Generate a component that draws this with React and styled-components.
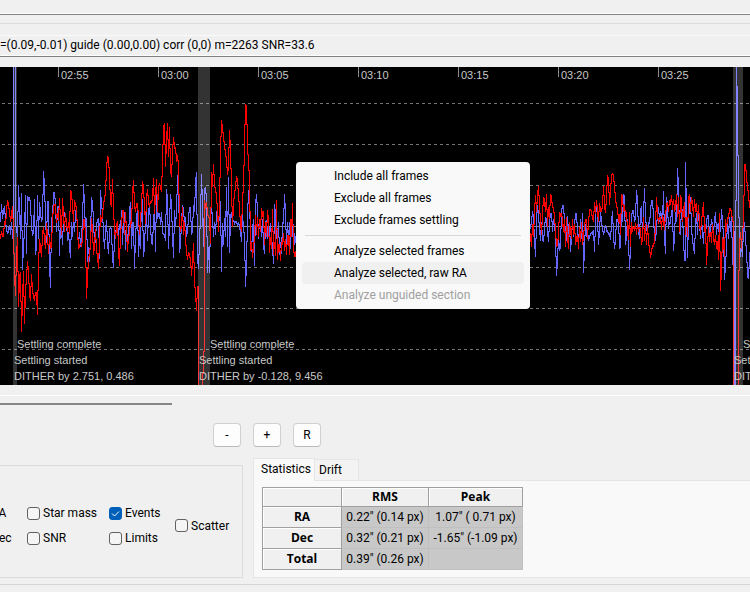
import styled, { createGlobalStyle } from 'styled-components';

// pixels above the zero line, one sample per pixel column
const raTrace = [
    {
        start: 0,
        values: [
            -12, -4, -10, -10, 6, 2, 14, 27, 20, 15, 5, 10, 21, -5, -50, -69, -30, -10, -80, -52,
            -45, -105, -73, -44, -97, -65, -52, -34, -46, -69, -74, -47, -65, -70, -74, -65, -68, -88, -40, -12,
            -22, -30, -8, 0, -15, -22, 4, -10, -27, -10, -22, -20, 8, 18, 23, 20, 4, 14, 6, 29,
            5, -8, 29, 10, -5, 14, 2, -5, 5, -7, 37, 33, 20, 5, 27, 21, 18, -5, -22, -20,
            -17, -20, -12, 5, 8, -10, -72, -50, -34, -26, -20, 9, -5, -28, -20, -2, -24, -30, -42, -12,
            12, 5, 10, 23, 27, 35, 57, 71, 67, 50, 24, 20, 48, 18, -5, -12, 0, 6, -25, -39,
            -5, 0, 17, 15, -8, 15, -5, -25, -10, -8, 6, 3, 33, 47, 20, 15, 23, 22, 10, -8,
            7, 20, 46, 38, 20, 3, 27, 38, 24, 20, 26, 24, 27, 49, 13, 30, 48, 15, 38, 44,
            38, 35, 65, 98, 104, 60, 85, 104, 70, 100, 55, 50, 73, 90, 78, 80, 65, 72, 60, 4,
            -5, 0, 20, -8, 5, -14, -25, -33, -25, -30, -32, -49, -35, -16, -57, -66, -84, -60, -170, -170,
            -170, -170, -170, -125, 27, 18, 25, 12, 10, 8, -17, 55, 40, 63, 40, 38, 30, 15, -5, 24,
            73, 107, 97, 90, 80, 74, 65, 52, 60, 97, 75, 40, 0, 22, 33, 38, 51, 45, 30, 20,
            0, -5, 28, 40, 81, 123, 119, 85, 58, 53, -24, -15, -31, -22, -10, 12, -8, 10, -10, 8,
            -5, 19, 10, 16, -18, 5, -10, 17, 5, -26, -10, -22, 18, -28, -15, -29, 27, -33, -20, -17,
            -34, -15, -18, -6, -24, -12, -28, -8, -10, -28, 8, -10, 24, -22, -30, -30, -20,
        ],
    },
    {
        start: 529,
        values: [
            -5, -10, -20, 3, -10, 14, 32, 15, 30, 41, 20, 5, -8, 12, 30, 25, 15, 33, 0, 20,
            8, 33, 28, 20, 18, 10, -5, -20, -18, -8, 15, 10, 14, 5, -5, 8, -20, 10, -10, -22,
            5, -5, -12, 8, -8, 3, -18, -12, -8, -22, 0, -15, 5, -18, -10, 2, 5, 8, -12, 5,
            15, 18, 13, 8, 5, 25, 13, 27, 15, 5, 24, 15, 15, 20, 41, 20, 14, 30, 52, 45,
            22, 35, 50, 54, 50, 40, 28, 20, 18, 5, 13, -8, 33, 28, 15, 22, 10, 15, -5, -13,
            15, -20, 5, -5, 0, -4, 4, -8, 3, -5, 0, -4, -18, -12, 10, -14, 3, -18, 2, -16,
            -22, -31, -26, -18, -20, -14, 0, 30, 12, 3, 10, 8, -3, 12, 5, -3, 12, 20, 25, 15,
            27, 22, 32, 17, 28, 15, 18, 33, 10, 30, -5, 32, 25, 5, 15, 25, -8, 10, -10, 27,
            33, 15, 30, 22, 10, 28, 15, 24, 5, 22, 3, -8, 8, 12, 25, -5, 3, -38, -20, 0,
            -15, -5, -16, 3, -12, -18, -8, -22, -14, -33, 14, -64, -42, -10, -16, -30, 8, -5, 10, 8,
            18, 17, 14, 5, -170, -170, -170, -170, -170, -68, -20, -5, -22, -5, 2, 60, 63, 48, 40, 32,
            20, 18,
        ],
    },
];

const decTrace = [
    {
        start: 0,
        values: [
            5, 23, 8, 15, 21, 5, -4, -7, -5, 2, -8, 5, -12, 170, 170, 0, 0, -12, 42, 15,
            -12, 34, -43, -20, -5, 32, -27, 31, 26, 30, 22, 0, -9, -6, 28, -28, -20, 32, -12, 25,
            13, 5, 8, 56, 39, 10, -16, 26, 24, -40, -61, 8, 10, 32, 35, 20, -5, 18, 21, -29,
            5, -5, -18, 8, 15, 5, 6, -14, -5, -22, -31, 5, -10, 8, -5, 12, 19, -8, -17, -5,
            -20, -10, 5, 43, 20, -3, 9, -35, -20, -35, -10, 30, 22, 8, -20, -12, 3, 5, 9, -32,
            37, 20, 15, -8, -22, -5, 7, -18, -27, -5, 0, -5, -31, -41, -10, -5, -4, 5, -10, 3,
            -5, 17, -18, 5, 15, -23, 4, -20, -12, 15, 25, -22, 3, 4, -42, -10, 5, 21, -30, -8,
            -22, 32, 22, -30, -20, 5, 15, -14, 12, 23, 0, -16, -18, 5, 18, -25, 33, 8, 12, 14,
            2, 15, -6, -8, -9, -14, 38, 25, -22, 3, 33, 20, -10, -31, 17, 0, 15, 48, 53, -26,
            -18, 3, 22, 15, 5, 10, -10, -5, 8, 20, 18, -8, -5, 22, 15, 42, 55, -32, -42, -15,
            10, 53, 20, -20, 35, 40, 26, -46, -20, -46, 5, 20, 8, -10, 5, -8, 12, 18, -3, 15,
            26, -45, 4, -18, 9, -10, 40, -20, 50, -26, 8, 15, 3, 7, 2, 6, 4, 1, 5, -2,
            -5, -15, 15, -5, -8, -60, -38, 8, 37, 26, -10, -25, -5, 8, -39, 20, 33, 15, -12, 8,
            2, -10, 8, -20, -27, 3, 7, -12, 12, -15, 4, -10, -22, -37, 23, 10, -12, -10, 5, -28,
            -15, -27, 5, 3, 33, 12, -18, 5, -14, 5, -22, 8, -10, 3, -18, -15, -5,
        ],
    },
    {
        start: 529,
        values: [
            -5, 0, 3, 16, 8, -14, -30, 5, 22, 10, -3, -14, 5, -14, -15, -3, 10, 5, -5, -15,
            5, 12, 14, -5, 8, 4, -12, -49, -35, -10, -24, -20, 15, 20, 21, 5, -5, -14, 11, -8,
            5, -25, -12, 5, -10, 2, 12, 13, -5, -12, -10, 8, -12, 14, -46, -22, 3, -10, -5, -14,
            -10, -9, -5, -8, -3, -25, 5, 24, 8, -18, -5, 15, 5, -3, -8, -5, 2, -5, -4, -8,
            -7, -13, 3, 16, -10, -22, -14, 8, 5, 8, -22, -20, 20, 5, 33, 29, -18, -10, 8, -15,
            -43, -22, 8, 17, 15, 5, 8, 37, 25, -5, -12, 15, 21, -13, 10, 39, 8, 0, -8, 5,
            3, 15, 27, 25, 10, -12, -14, -3, 15, 20, 5, 16, 10, 5, 36, -12, -27, 30, 20, -2,
            5, 3, 17, 14, -24, -10, 15, 5, 59, 38, -7, -8, 22, 12, -15, -34, 65, 10, -31, 5,
            20, 30, -5, -12, -22, -27, 2, 14, -8, 20, 3, -12, 6, -5, -17, 5, -8, 3, 12, 10,
            -12, -5, 8, 0, -5, 5, 15, -8, 3, -5, 10, -5, 18, 3, -8, -53, -40, -20, 5, -12,
            10, -5, 15, -38, -5, -170, 26, 170, 110, 32, -15, -30, -20, -30, 0, 5, -16, -22, -50, -52,
            -32, -20,
        ],
    },
];

const timeTicks = [
    { x: 58, label: '02:55' },
    { x: 158, label: '03:00' },
    { x: 258, label: '03:05' },
    { x: 358, label: '03:10' },
    { x: 458, label: '03:15' },
    { x: 558, label: '03:20' },
    { x: 658, label: '03:25' },
];

const dithers = [
    { x: 13, width: 4, text: 'DITHER by 2.751, 0.486' },
    { x: 198, width: 12, text: 'DITHER by -0.128, 9.456' },
    { x: 733, width: 10, text: 'DITHER by 1.904, -7.312' },
];

const gridLines = [36, 77, 118, 200, 241, 282];
const ZERO = 159;
const BIG_JUMP = 90;

// neighbouring samples meet halfway, big jumps stay in one column
function meet(a, b) {
    return Math.abs(a - b) > BIG_JUMP ? a : Math.round((a + b) / 2);
}

function toPoints({ start, values }) {
    const points = [];
    values.forEach((v, i) => {
        const x = start + i + 0.5;
        const next = values[i + 1] ?? v;
        const join = meet(v, next);
        points.push([x, v], [x, join], [x + 1, join]);
    });
    return points.map(([x, v]) => `${x},${ZERO - v + 0.5}`).join(' ');
}

function GuideGraph() {
    return (
        <Graph role="img" aria-label="Guiding graph">
            {gridLines.map((y) => (
                <line key={y} x1="2" x2="100%" y1={y + 0.5} y2={y + 0.5} stroke="#757575" strokeDasharray="3 3" />
            ))}
            <line x1="0" x2="100%" y1={ZERO + 0.5} y2={ZERO + 0.5} stroke="#8c8c8c" />
            {timeTicks.map(({ x, label }) => (
                <g key={x}>
                    <rect x={x} y="0" width="1" height="10" fill="#8c8c8c" />
                    <text x={x + 3} y="12">{label}</text>
                </g>
            ))}
            {decTrace.map((part) => (
                <polyline key={part.start} points={toPoints(part)} stroke="#6464ff" />
            ))}
            {raTrace.map((part) => (
                <polyline key={part.start} points={toPoints(part)} stroke="#ff0000" />
            ))}
            {dithers.map(({ x, width, text }) => (
                <g key={x}>
                    <rect x={x} y="0" width={width} height="318" fill="#ffffff" fillOpacity="0.2" />
                    <text x={x + width} y="281">Settling complete</text>
                    <text x={x + 1} y="297">Settling started</text>
                    <text x={x + 1} y="313">{text}</text>
                </g>
            ))}
        </Graph>
    );
}

function Check({ label, checked }) {
    return (
        <CheckLabel>
            <CheckBox type="checkbox" defaultChecked={checked} />
            <CheckMark viewBox="0 0 13 13">
                <path d="M3 6.5 L5.5 9 L10 4.5" />
            </CheckMark>
            {label}
        </CheckLabel>
    );
}

export default function App() {
    return (
        <Page>
            <GlobalStyle />
            <TopStrip />
            <Gap />
            <StatusText>=(0.09,-0.01) guide (0.00,0.00) corr (0,0) m=2263 SNR=33.6</StatusText>
            <GraphArea>
                <GuideGraph />
                <Menu role="menu">
                    <MenuItem role="menuitem">Include all frames</MenuItem>
                    <MenuItem role="menuitem">Exclude all frames</MenuItem>
                    <MenuItem role="menuitem">Exclude frames settling</MenuItem>
                    <Separator />
                    <MenuItem role="menuitem">Analyze selected frames</MenuItem>
                    <MenuItem role="menuitem" $active>Analyze selected, raw RA</MenuItem>
                    <MenuItem role="menuitem" disabled>Analyze unguided section</MenuItem>
                </Menu>
            </GraphArea>
            <ScrollTrack>
                <ScrollThumb />
            </ScrollTrack>
            <ZoomButtons>
                <ZoomButton>-</ZoomButton>
                <ZoomButton>+</ZoomButton>
                <ZoomButton>R</ZoomButton>
            </ZoomButtons>
            <Bottom>
                <Options>
                    <OptionColumn $width={52}>
                        <Check label="RA" checked />
                        <Check label="Dec" checked />
                    </OptionColumn>
                    <OptionColumn $width={82}>
                        <Check label="Star mass" />
                        <Check label="SNR" />
                    </OptionColumn>
                    <OptionColumn $width={66}>
                        <Check label="Events" checked />
                        <Check label="Limits" />
                    </OptionColumn>
                    <OptionColumn $width={66}>
                        <Check label="Scatter" />
                    </OptionColumn>
                </Options>
                <Notebook>
                    <Tabs role="tablist">
                        <Tab role="tab" aria-selected="true" $active>Statistics</Tab>
                        <Tab role="tab" aria-selected="false">Drift</Tab>
                    </Tabs>
                    <TabPanel role="tabpanel">
                        <Stats>
                            <colgroup>
                                <col width="79" />
                                <col width="87" />
                                <col width="94" />
                            </colgroup>
                            <thead>
                                <tr>
                                    <th></th>
                                    <th>RMS</th>
                                    <th>Peak</th>
                                </tr>
                            </thead>
                            <tbody>
                                <tr>
                                    <th>RA</th>
                                    <td>0.22" (0.14 px)</td>
                                    <td>1.07" ( 0.71 px)</td>
                                </tr>
                                <tr>
                                    <th>Dec</th>
                                    <td>0.32" (0.21 px)</td>
                                    <td>-1.65" (-1.09 px)</td>
                                </tr>
                                <tr>
                                    <th>Total</th>
                                    <td>0.39" (0.26 px)</td>
                                    <td></td>
                                </tr>
                            </tbody>
                        </Stats>
                    </TabPanel>
                </Notebook>
            </Bottom>
        </Page>
    );
}

const GlobalStyle = createGlobalStyle`
    * {
        box-sizing: border-box;
    }

    body {
        margin: 0;
        background-color: #f0f0f0;
        overflow-x: hidden;
    }

    body, button, input, table {
        font-family: Roboto, "Open Sans", sans-serif;
        font-size: 12px;
        line-height: 16px;
        color: #000;
    }
`

const Page = styled.div`
    display: flex;
    flex-direction: column;
    overflow: hidden;
`

const TopStrip = styled.div`
    height: 15px;
    border-bottom: 1px solid #828282;
    box-shadow: inset 0 -1px #fff;
`

const Gap = styled.div`
    height: 9px;
    border-bottom: 1px solid #dcdcdc;
`

const StatusText = styled.div`
    margin-top: 11px;
    padding: 1px 0;
    height: 22px;
    border-top: 1px solid #fafafa;
    border-bottom: 1px solid #828282;
    box-shadow: inset 0 -1px #fff;
    white-space: nowrap;
`

const GraphArea = styled.div`
    position: relative;
    margin-top: 10px;
    background-color: #000;
`

const Graph = styled.svg`
    display: block;
    width: 100%;
    height: 318px;
    shape-rendering: crispEdges;

    polyline {
        fill: none;
        stroke-width: 1;
    }

    text {
        font-family: "Liberation Sans", Arial, sans-serif;
        font-size: 11px;
        fill: #c8c8c8;
    }
`

const Menu = styled.div`
    position: absolute;
    left: 296px;
    top: 95px;
    width: 234px;
    padding: 3px 6px;
    border-radius: 4px;
    background-color: #f9f9f9;
`

const MenuItem = styled.button`
    display: block;
    width: 100%;
    height: 22px;
    padding: 0 0 0 32px;
    border: none;
    border-radius: 4px;
    background-color: ${({ $active }) => ($active ? '#f0f0f0' : 'transparent')};
    text-align: left;
    white-space: nowrap;

    &:disabled {
        color: #a0a0a0;
    }
`

const Separator = styled.hr`
    margin: 4px 3px;
    border: none;
    height: 1px;
    background-color: #d7d7d7;
`

const ScrollTrack = styled.div`
    margin-top: 10px;
    padding-top: 7px;
    border-top: 1px solid #fff;
`

const ScrollThumb = styled.div`
    width: 172px;
    height: 2px;
    background-color: #868686;
`

const ZoomButtons = styled.div`
    display: flex;
    gap: 12px;
    margin: 18px 0 0 213px;
`

const ZoomButton = styled.button`
    width: 28px;
    height: 24px;
    padding: 0;
    border: 1px solid #d0d0d0;
    border-bottom-color: #bababa;
    border-radius: 4px;
    background-color: #fdfdfd;
`

const Bottom = styled.div`
    display: flex;
    align-items: flex-end;
    gap: 10px;
    margin-top: 11px;
    padding-bottom: 6px;
    border-bottom: 1px solid #d5d5d5;
`

const Options = styled.fieldset`
    flex: none;
    display: flex;
    align-items: center;
    width: 269px;
    height: 113px;
    margin: 0 0 0 -26px;
    padding: 8px 0 0;
    border: 1px solid #dcdcdc;
`

const OptionColumn = styled.div`
    display: flex;
    flex-direction: column;
    gap: 9px;
    width: ${({ $width }) => $width}px;
`

const CheckLabel = styled.label`
    position: relative;
    display: flex;
    align-items: center;
    gap: 3px;
    white-space: nowrap;
`

const CheckBox = styled.input`
    appearance: none;
    width: 13px;
    height: 13px;
    margin: 0;
    border: 1px solid #626262;
    border-radius: 3px;
    background-color: #f5f5f5;

    &:checked {
        border-color: #005fb8;
        background-color: #005fb8;
    }
`

const CheckMark = styled.svg`
    position: absolute;
    left: 0;
    width: 13px;
    height: 13px;
    pointer-events: none;

    path {
        fill: none;
        stroke: #fff;
        stroke-width: 1;
    }

    input:not(:checked) + & {
        display: none;
    }
`

const Notebook = styled.div`
    flex: 1;
    margin-right: -2px;
`

const Tabs = styled.div`
    display: flex;
    align-items: flex-end;
`

const Tab = styled.button`
    width: ${({ $active }) => ($active ? 62 : 44)}px;
    height: ${({ $active }) => ($active ? 23 : 21)}px;
    margin-bottom: ${({ $active }) => ($active ? -1 : 0)}px;
    padding: ${({ $active }) => ($active ? '0 0 2px 7px' : '0 0 0 4px')};
    border: 1px solid #e5e5e5;
    border-bottom: none;
    border-left-width: ${({ $active }) => ($active ? 1 : 0)}px;
    background-color: ${({ $active }) => ($active ? '#f9f9f9' : '#f3f3f3')};
    text-align: left;
    white-space: nowrap;
    position: relative;
`

const TabPanel = styled.div`
    padding: 6px 8px 7px;
    border: 1px solid #e5e5e5;
    background-color: #f9f9f9;
`

const Stats = styled.table`
    width: 261px;
    table-layout: fixed;
    border-collapse: collapse;

    th, td {
        height: 21px;
        padding: 0;
        text-align: center;
        white-space: nowrap;
    }

    thead th {
        height: 19px;
    }

    th {
        border: 1px solid #a0a0a0;
        background-color: #f0f0f0;
        box-shadow: inset 1px 1px #fff;
        font-family: "Open Sans", sans-serif;
        font-weight: bold;
    }

    td {
        border: 1px solid #c0c0c0;
        background-color: #c8c8c8;
    }
`
